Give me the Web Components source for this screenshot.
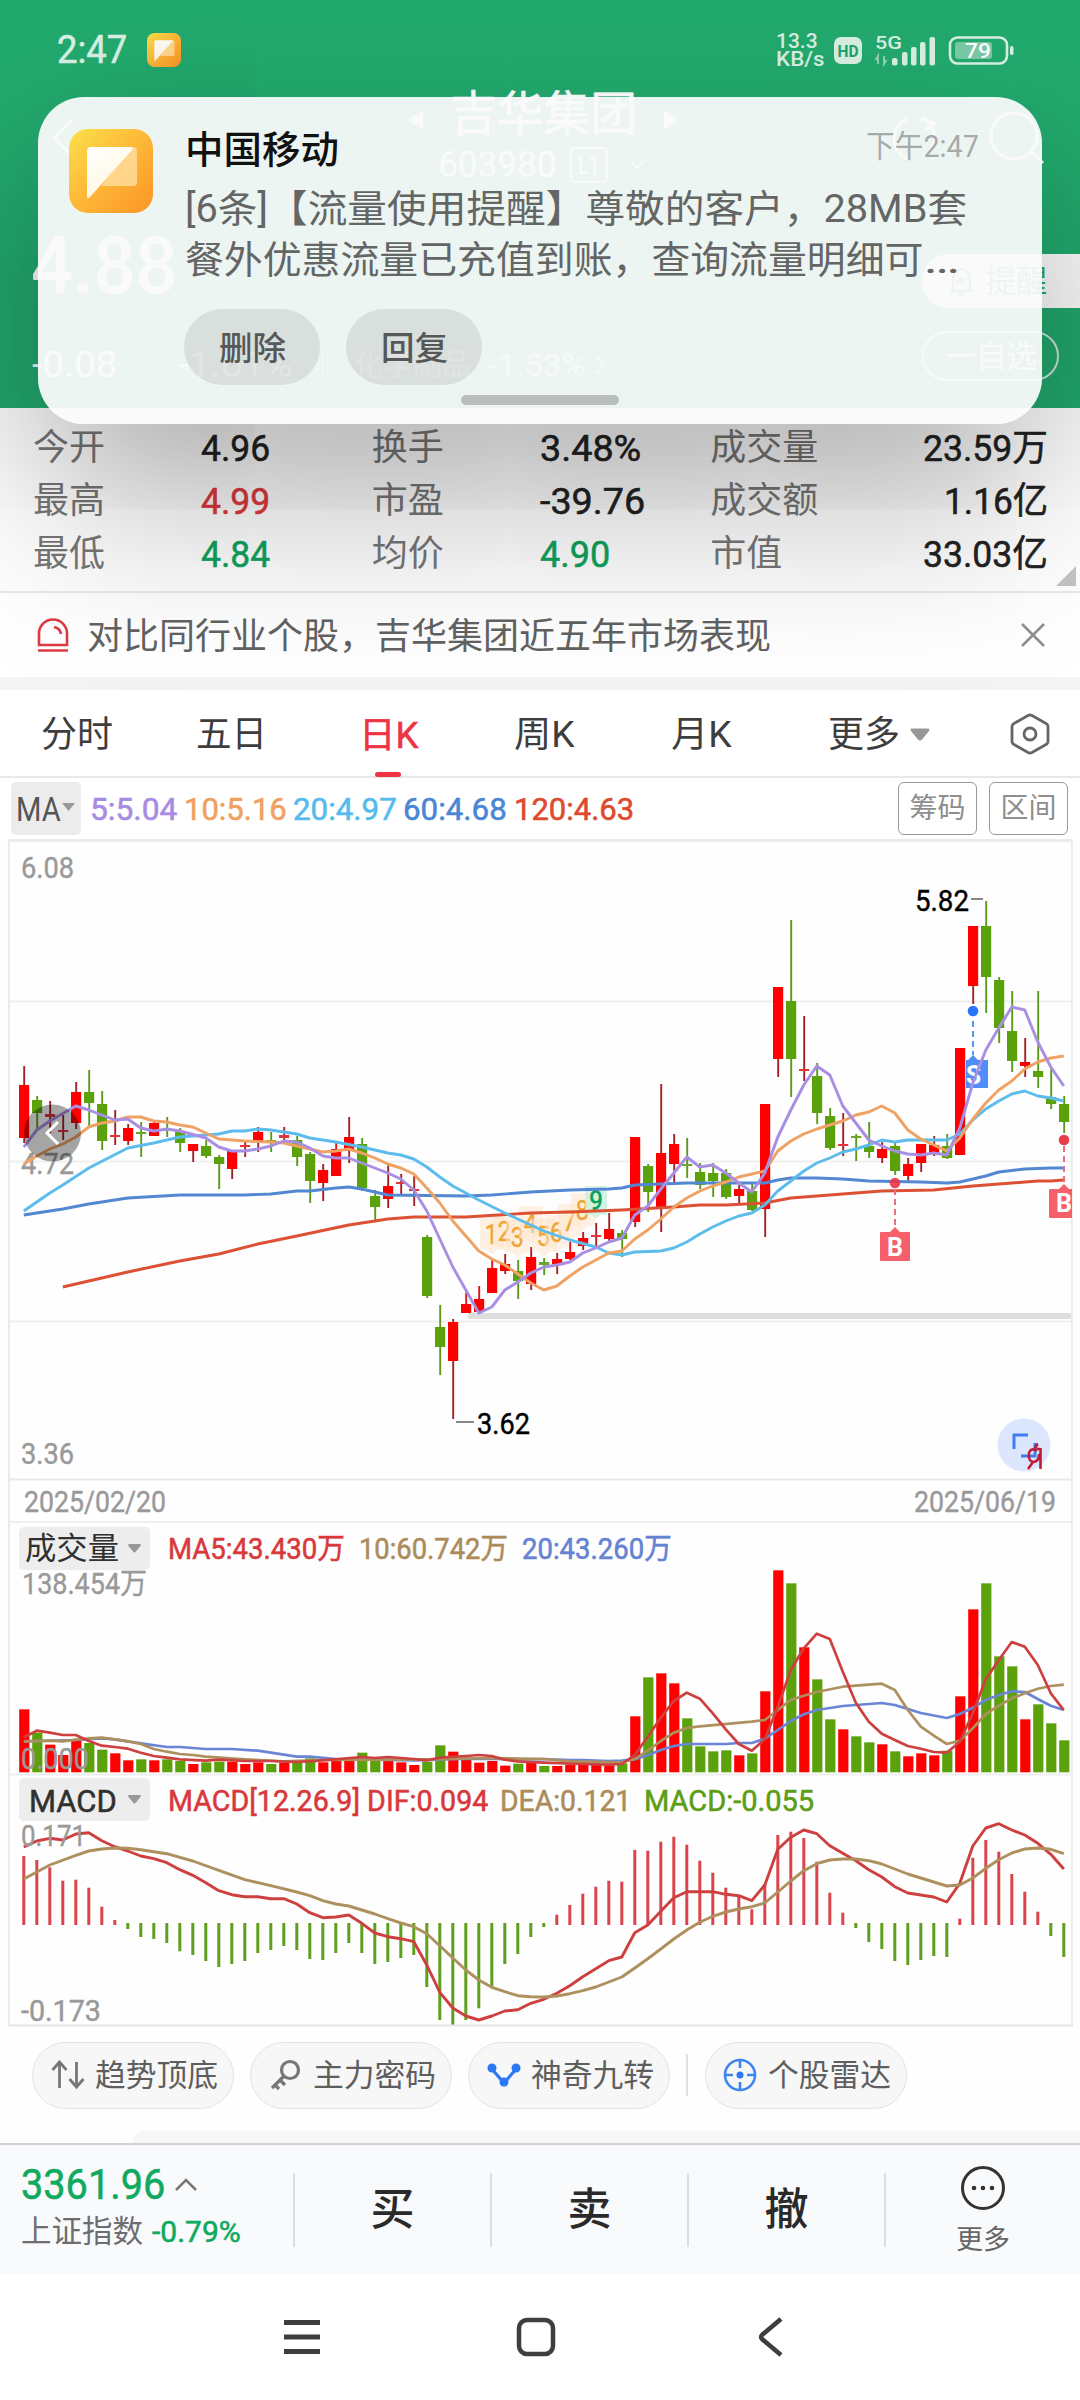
<!DOCTYPE html>
<html lang="zh-CN">
<head>
<meta charset="utf-8">
<title>吉华集团 603980</title>
<style>
html,body{margin:0;padding:0;background:#fff}
body{width:1080px;height:2400px;overflow:hidden;font-family:Roboto,"Noto Sans CJK SC",sans-serif}
</style>
</head>
<body>
<stock-app></stock-app>
<script>
const FONT = 'Roboto,"Noto Sans CJK SC",sans-serif';
const define = (name, html, setup) => customElements.define(name, class extends HTMLElement {
  connectedCallback() {
    if (this.shadowRoot) return;
    const root = this.attachShadow({ mode: 'open' });
    root.innerHTML = typeof html === 'function' ? html(this) : html;
    if (setup) setup(this, root);
  }
});

/* One line of text, set to a given width. w = width, s = font size, c = colour, b = weight, m = slightly emboldened */
define('fit-text', el => `<style>
  :host{display:block;flex:none;width:${el.getAttribute('w')}px;height:${el.getAttribute('s')}px;line-height:${el.getAttribute('s')}px;
    font-size:${el.getAttribute('s')}px;font-family:${FONT};${el.hasAttribute('c') ? 'color:' + el.getAttribute('c') + ';' : ''}font-weight:${el.getAttribute('b') || 400};
    ${el.hasAttribute('m') ? '-webkit-text-stroke:.55px currentColor;' : ''}}
  span{display:inline-block;white-space:nowrap;transform-origin:0 50%}
  </style><span><slot></slot></span>`, (el, root) => {
  const span = root.querySelector('span');
  const w = span.offsetWidth;
  if (w) span.style.transform = `scaleX(${el.getAttribute('w') / w})`;
});

define('app-icon', el => `<style>:host{display:block;flex:none;width:${el.getAttribute('w')}px;height:${el.getAttribute('w')}px}svg{display:block;width:100%;height:100%}</style>
<svg viewBox="0 0 84 84"><defs><linearGradient id="a" x1="0" y1="0" x2="1" y2="1"><stop offset="0" stop-color="#fbe14b"/><stop offset=".45" stop-color="#fdbb39"/><stop offset="1" stop-color="#fd9427"/></linearGradient>
<linearGradient id="b" x1="0" y1="0" x2=".6" y2="1"><stop offset="0" stop-color="#fff"/><stop offset="1" stop-color="#fff6df"/></linearGradient></defs>
<rect width="84" height="84" rx="19" fill="url(#a)"/><path d="M62 18 h2 q4 0 4 4 v31 q0 4 -4 4 H32Z" fill="#ffdc9a" opacity=".85"/>
<path d="M22 18 H62 q3 0 1 3 L21 68 q-3 3 -3 -1 V22 q0 -4 4 -4Z" fill="url(#b)"/></svg>`);

define('status-bar', `<style>
:host{display:flex;height:100px;box-sizing:border-box;align-items:center;color:#d9f1e5}
.l,.r{display:flex;align-items:center}.l{margin-left:57px;gap:20px;flex:1}
.rate{margin-right:8px;display:flex;flex-direction:column}
.rate fit-text+fit-text{margin-top:-3px}
svg{display:block;overflow:visible}
</style>
<div class="l"><fit-text w="70" s="38" m>2:47</fit-text><app-icon w="34"></app-icon></div>
<div class="r"><div class="rate"><fit-text w="42" s="21" b="500">13.3</fit-text><fit-text w="49" s="21" b="500">KB/s</fit-text></div>
<svg width="182" height="34" viewBox="833 32 182 34">
<rect x="834" y="36" width="28" height="27" rx="7" fill="#d9f1e5"/><text x="837.500" y="55.800" font-family="Roboto" font-weight="700" font-size="17" textLength="21" lengthAdjust="spacingAndGlyphs" fill="#21a36a">HD</text>
<text x="875" y="48" font-family="Roboto" font-weight="500" font-size="18.500" textLength="27" lengthAdjust="spacingAndGlyphs" fill="#d9f1e5">5G</text>
<path d="M878 63V55l-2.500 4M884 55v8l2.500-4" stroke="#8fd2b3" stroke-width="2" fill="none"/>
<g fill="#d9f1e5"><rect x="892" y="57" width="5.500" height="7.500" rx="2"/><rect x="902" y="51" width="5.500" height="13.500" rx="2"/><rect x="911" y="46" width="5.500" height="18.500" rx="2"/><rect x="920" y="41" width="5.500" height="23.500" rx="2"/><rect x="929.500" y="36" width="5.500" height="28.500" rx="2"/></g>
<rect x="950" y="36.500" width="57" height="26" rx="7.500" fill="none" stroke="#d9f1e5" stroke-width="2.600"/><rect x="955" y="41" width="37" height="17" rx="3" fill="#7ccaa6"/>
<rect x="1010" y="45" width="3.500" height="9" rx="1.700" fill="#d9f1e5"/>
<text x="965" y="57" font-family="Roboto" font-weight="500" font-size="21" textLength="26" lengthAdjust="spacingAndGlyphs" fill="#fff">79</text></svg></div>`,
el => { el.style.paddingRight = '65px'; });

define('quote-header', `<style>
:host{display:block;height:408px;background:#22aa6e;color:#fff;overflow:hidden}
div{display:flex;align-items:center}
svg{display:block;flex:none}
.nav{height:108px;margin-top:-16px}
.mid{flex-direction:column;width:300px;margin-left:319px;align-items:center}
.title{height:54px;gap:27px;padding-top:5px;box-sizing:border-box}.code{height:54px;gap:14px;margin-left:-4px}
.l1{width:34px;height:32px;border:2px solid #fff;border-radius:5px;justify-content:center}
.tri{width:0;height:0;border:10px solid transparent;margin-top:12px}
.price{height:148px;justify-content:space-between;padding-left:31px}
.remind{width:158px;height:54px;background:#fff;border-radius:27px 0 0 27px;color:#22aa6e;gap:9px;margin-top:30px;box-sizing:border-box;padding-left:25px}
.chg{height:50px;padding-left:32px}
.fav{width:137px;height:50px;box-sizing:border-box;border:2px solid rgba(255,255,255,.75);border-radius:26px;justify-content:center;margin-left:auto;margin-right:21px;margin-top:-18px}
.dim{opacity:.65}
</style>
<status-bar></status-bar>
<div class="nav"><svg width="22" height="40" viewBox="0 0 22 40" style="margin-left:52px"><path d="M20 2 2 20l18 18" fill="none" stroke="#fff" stroke-width="3"/></svg>
<div class="mid"><div class="title"><span class="tri" style="border-right:15px solid #fff;border-left:0"></span><fit-text w="187" s="47" m>吉华集团</fit-text><span class="tri" style="border-left:15px solid #fff;border-right:0"></span></div>
<div class="code"><fit-text w="118" s="36">603980</fit-text><div class="l1"><fit-text w="22" s="25">L1</fit-text></div><svg width="14" height="12" viewBox="0 0 14 12" style="margin-left:8px"><path d="M1 2l6 7 6-7" fill="none" stroke="#fff" stroke-width="2"/></svg></div></div>
<svg width="152" height="56" viewBox="893 108 152 56" style="margin-left:200px"><path d="M907 117A21 21 0 0 0 910 157M924 154A21 21 0 0 0 921 116M923 116l11 5-9 7" fill="none" stroke="#fff" stroke-width="3"/><circle cx="1014" cy="134" r="23" fill="none" stroke="#fff" stroke-width="3"/><path d="M1031 150l12 11" stroke="#fff" stroke-width="3"/></svg></div>
<div class="price"><fit-text w="147" s="80" b="500">4.88</fit-text><div class="remind"><svg width="29" height="30" viewBox="0 0 29 30"><path d="M3 25h23M6 24V12a8.500 8.500 0 0 1 17 0v12M11 28h7M10 17l4-5 1 5 4-4" fill="none" stroke="#22aa6e" stroke-width="2.500"/></svg><fit-text w="62" s="31">提醒</fit-text></div></div>
<div class="chg"><fit-text w="85" s="36">-0.08</fit-text><fit-text w="115" s="36" style="margin-left:61px">-1.61%</fit-text><span class="dim" style="width:1px;height:28px;background:#fff;margin:0 31px 0 29px"></span><fit-text class="dim" w="117" s="30">化学制品</fit-text><fit-text class="dim" w="98" s="31" style="margin-left:17px">-1.53%</fit-text><svg class="dim" width="12" height="20" viewBox="0 0 12 20" style="margin-left:9px"><path d="M1 1l8 9-8 9" fill="none" stroke="#fff" stroke-width="2"/></svg>
<div class="fav"><fit-text w="92" s="31">一自选</fit-text></div></div>`);

define('notice-card', `<style>
:host{display:flex;position:absolute;left:38px;top:97px;width:1004px;height:327px;box-sizing:border-box;border-radius:46px;background:rgba(250,250,250,.945);
box-shadow:0 72px 180px rgba(0,0,0,.34);padding:32px 74px 0 31px}
.body{margin-left:32px;flex:1;padding-top:2px}
.top{display:flex;justify-content:space-between;align-items:center;height:38px;width:794px;color:#a6aba9}
.btns{display:flex;gap:26px;margin-top:30px;margin-left:-1px}
.btn{width:136px;height:76px;border-radius:38px;background:rgba(0,0,0,.085);display:flex;align-items:center;justify-content:center;padding-top:2px;box-sizing:border-box}
.handle{width:158px;height:10px;border-radius:5px;background:#b9bdbc;margin:10px 0 0 276px}
.e{display:inline-block;transform:scaleX(1.4);transform-origin:0 50%}
</style>
<app-icon w="84"></app-icon>
<div class="body"><div class="top"><fit-text w="154" s="38" c="#111" b="500">中国移动</fit-text><fit-text w="113" s="31" style="margin-top:-7px">下午2:47</fit-text></div>
<fit-text w="782" s="38" c="#646665" style="margin-top:21px">[6条]【流量使用提醒】尊敬的客户，28MB套</fit-text>
<fit-text w="764" s="38" c="#646665" style="margin-top:13px">餐外优惠流量已充值到账，查询流量明细可<span class="e">…</span></fit-text>
<div class="btns"><div class="btn"><fit-text w="67" s="33" c="#555857" b="500">删除</fit-text></div><div class="btn"><fit-text w="67" s="33" c="#555857" b="500">回复</fit-text></div></div>
<div class="handle"></div></div>`);

const stats = [
  ['今开','4.96','#222',69,'换手','3.48%','#222',101,'成交量','23.59万','#222',125],
  ['最高','4.99','#e0393c',69,'市盈','-39.76','#222',105,'成交额','1.16亿','#222',104],
  ['最低','4.84','#0fa35e',69,'均价','4.90','#0fa35e',70,'市值','33.03亿','#222',125]];
define('quote-stats', () => `<style>
:host{display:block;height:185px;box-sizing:border-box;background:#fff;padding:14px 32px 0 33px;border-bottom:2px solid #e9e9e9;color:#777}
.row{display:flex;height:53px;align-items:center}
.c{display:flex}.a{width:339px}.a fit-text:first-child{width:72px;margin-right:96px}
.z{width:338px;justify-content:space-between}
.tri{width:0;height:0;border:10px solid #c4c4c4;border-top-color:transparent;border-left-color:transparent;margin:-15px -28px 0 auto}
</style>` + stats.map(r => `<div class="row"><div class="c a"><fit-text w="72" s="36">${r[0]}</fit-text><fit-text w="${r[3]}" s="37" c="${r[2]}" m>${r[1]}</fit-text></div>
<div class="c a"><fit-text w="72" s="36">${r[4]}</fit-text><fit-text w="${r[7]}" s="37" c="${r[6]}" m>${r[5]}</fit-text></div>
<div class="c z"><fit-text w="${r[8].length * 36}" s="36">${r[8]}</fit-text><fit-text w="${r[11]}" s="37" c="${r[10]}" m>${r[9]}</fit-text></div></div>`).join('') + '<div class="tri"></div>');

define('tip-bar', `<style>:host{display:flex;height:84px;align-items:center;background:#fff;border-bottom:13px solid #f4f4f4;padding:0 35px 0 37px}svg{display:block}</style>
<svg width="32" height="34" viewBox="0 0 32 34"><path d="M2 27V15.500a14 14 0 0 1 28 0V27ZM17 9q6 1 7 7M1 32.500h30" fill="none" stroke="#de3b45" stroke-width="2.600"/></svg>
<fit-text w="684" s="36" c="#626262" style="margin:3px 0 0 18px">对比同行业个股，吉华集团近五年市场表现</fit-text>
<svg width="24" height="24" viewBox="0 0 24 24" style="margin-left:auto"><path d="M1 1l22 22M23 1L1 23" stroke="#8f8f8f" stroke-width="2.500"/></svg>`);

define('period-tabs', `<style>:host{display:flex;height:88px;box-sizing:border-box;align-items:center;border-bottom:2px solid #e8e8e8;padding:2px 30px 0 41px;background:#fff;color:#3d3d3d}
svg{display:block}fit-text{margin-top:2px}.on{display:flex;flex-direction:column;align-items:center;height:86px;box-sizing:border-box;padding-top:25px}
.on i{width:26px;height:6px;border-radius:3px;background:#ee3344;margin-top:18px;margin-left:-2px}</style>
<fit-text w="72" s="36">分时</fit-text><fit-text w="71" s="36" style="margin-right:92px;margin-left:83px">五日</fit-text>
<div class="on"><fit-text w="60" s="36" c="#ee3344" m>日K</fit-text><i></i></div>
<fit-text w="61" s="36" style="margin-right:96px;margin-left:95px">周K</fit-text><fit-text w="61" s="36">月K</fit-text><fit-text w="72" s="36" style="margin-left:96px">更多</fit-text>
<svg width="20" height="13" viewBox="0 0 20 13" style="margin-left:10px"><path d="M1.500 0.500h17q1.500 1 .5 2.500l-7 8.500q-2 2-4 0l-7-8.500q-1-2 .5-2.500Z" fill="#979797"/></svg>
<svg width="40" height="42" viewBox="0 0 40 42" style="margin-left:auto"><path d="M18 2.500q2-1 4 0l14 8q2 1 2 3.500v14q0 2.500-2 3.500l-14 8q-2 1-4 0l-14-8q-2-1-2-3.500V14q0-2.500 2-3.500Z" fill="none" stroke="#666" stroke-width="2.800"/><circle cx="20" cy="21" r="6" fill="none" stroke="#666" stroke-width="2.800"/></svg>`);

define('ma-legend', `<style>:host{display:flex;height:61px;box-sizing:border-box;align-items:center;padding:0 12px 0 11px;background:#fff}
fit-text{margin-top:1px}
.b{display:flex;align-items:center;width:70px;height:53px;background:#ececec;border-radius:5px;box-sizing:border-box;padding-left:5px;gap:1px}
.k{width:79px;height:53px;box-sizing:border-box;border:1.500px solid #999;border-radius:6px;display:flex;align-items:center;justify-content:center}svg{display:block;margin-top:-2px}</style>
<div class="b"><fit-text w="45" s="33" c="#555">MA</fit-text><svg width="13" height="9"><path d="M0 0h13L6.500 8Z" fill="#999"/></svg></div>
<fit-text w="87" s="31" c="#a78be4" m style="margin-left:9px">5:5.04</fit-text>
<fit-text w="103" s="31" c="#f0a060" m style="margin-left:7px">10:5.16</fit-text>
<fit-text w="104" s="31" c="#55bbee" m style="margin-left:6px">20:4.97</fit-text>
<fit-text w="104" s="31" c="#4a86d4" m style="margin-left:6px">60:4.68</fit-text>
<fit-text w="120" s="31" c="#de4a2e" m style="margin-left:7px">120:4.63</fit-text>
<div class="k" style="margin-left:auto"><fit-text w="56" s="28" c="#8e8e8e">筹码</fit-text></div><div class="k" style="margin-left:12px"><fit-text w="56" s="28" c="#8e8e8e">区间</fit-text></div>`);

/* ---- charts: each step of the time axis is 13px ---- */
const X = i => 23.8 + 13 * i;
const line = (pts, color, w = 2.9, f = v => v) => `<polyline points="${pts.trim().split(/\s+/).map(p => { const [i, y] = p.split(':'); return X(+i).toFixed(1) + ',' + f(+y).toFixed(1); }).join(' ')}" fill="none" stroke="${color}" stroke-width="${w}" stroke-linejoin="round"/>`;
const label = (x, y, w, t, c = '#999', s = 29, b = 400) => `<text x="${x}" y="${y}" textLength="${w}" lengthAdjust="spacingAndGlyphs" font-size="${s}" font-weight="${b}" fill="${c}"${b === 400 ? ` stroke="${c}" stroke-width=".4"` : ''}>${t}</text>`;
const RED = '#fe0000', GREEN = '#5ba10c';
/* colour, high, body top, body bottom, low */
const candles = `r1066,1085,1138,1143 g1096,1100,1113,1130 r1101,1114,1117,1133 r1115,1130,1132,1140 r1082,1092,1123,1129 g1070,1092,1103,1127 g1091,1104,1141,1150 r1110,1135,1137,1145 r1124,1128,1141,1145 g1122,1132,1134,1157
r1122,1123,1136,1136 g1117,1129,1131,1137 g1128,1132,1143,1152 r1144,1144,1151,1162 g1140,1146,1156,1158 g1155,1157,1164,1189 r1151,1151,1169,1179 r1140,1145,1147,1157 r1127,1132,1142,1152 g1132,1140,1142,1152
r1127,1135,1138,1142 g1136,1140,1157,1166 g1152,1154,1181,1203 r1164,1170,1183,1201 r1143,1149,1176,1176 r1117,1137,1151,1163 g1138,1144,1188,1191 g1190,1196,1207,1222 r1165,1186,1199,1208 r1174,1182,1184,1194
r1176,1189,1191,1206 g1235,1237,1296,1298 g1305,1327,1347,1375 r1319,1322,1361,1419 r1289,1304,1313,1313 r1286,1299,1312,1312 r1259,1268,1293,1293 r1254,1264,1271,1274 g1260,1271,1281,1299 r1247,1257,1284,1290
g1258,1262,1265,1275 r1253,1259,1264,1274 r1242,1252,1259,1260 r1232,1238,1246,1250 r1223,1235,1237,1247 r1213,1229,1239,1243 g1230,1233,1239,1257 r1137,1137,1222,1227 g1164,1166,1192,1212 r1084,1153,1209,1232
r1134,1144,1164,1182 g1138,1164,1166,1178 g1163,1172,1185,1189 g1163,1173,1181,1197 g1169,1173,1197,1199 r1185,1189,1196,1203 g1183,1191,1210,1211 r1104,1104,1209,1237 r987,987,1059,1077 g920,1001,1059,1097
r1016,1069,1071,1081 g1063,1076,1113,1124 g1108,1116,1148,1150 r1113,1144,1146,1156 g1134,1136,1138,1161 g1122,1146,1152,1158 r1142,1149,1158,1163 g1143,1146,1171,1175 r1158,1164,1176,1181 r1144,1144,1163,1172
r1136,1145,1153,1156 g1134,1146,1158,1159 r1048,1048,1155,1155 r926,926,986,1004 g901,926,977,1013 g977,980,1028,1043 g991,1031,1061,1072 r1038,1062,1066,1077 g991,1071,1077,1088 g1067,1097,1104,1109 g1096,1104,1122,1133`
  .trim().split(/\s+/).map(s => [s[0] === 'r', ...s.slice(1).split(',').map(Number)]);

const ma5 = '0:1147 1:1130 2:1121 4:1106 5:1110 7:1120 8:1119 9:1128 10:1131 11:1129 12:1131 14:1138 15:1147 16:1151 17:1151 18:1149 19:1146 20:1141 21:1142 22:1148 23:1156 24:1158 25:1158 26:1163 27:1168 28:1173 29:1179 30:1190 31:1211 33:1267 34:1290 35:1313 36:1307 37:1290 38:1282 39:1273 40:1267 41:1265 42:1262 43:1253 44:1248 45:1242 46:1238 47:1215 48:1206 49:1189 50:1173 51:1157 52:1167 53:1165 54:1173 55:1183 56:1192 57:1173 58:1137 59:1110 60:1085 61:1066 62:1075 63:1106 64:1123 65:1140 66:1146 67:1151 68:1154 69:1155 70:1153 71:1155 72:1128 73:1083 74:1050 75:1028 76:1007 77:1010 78:1042 79:1067 80:1086';
const ma10 = '0:1164 1:1156 2:1149 3:1144 4:1137 5:1127 6:1123 7:1121 8:1117 9:1117 10:1121 11:1122 12:1125 13:1127 14:1133 15:1139 17:1141 19:1142 20:1143 21:1146 22:1149 23:1152 24:1151 25:1149 26:1153 27:1158 28:1164 29:1168 30:1174 31:1188 32:1203 33:1221 35:1251 36:1259 37:1265 38:1274 39:1283 40:1290 41:1286 42:1276 43:1267 44:1260 45:1253 46:1251 47:1239 48:1230 49:1219 50:1207 51:1198 52:1191 53:1186 54:1182 55:1177 57:1171 58:1151 59:1141 60:1134 61:1129 63:1121 64:1115 65:1112 66:1106 67:1113 68:1130 69:1139 70:1145 71:1151 72:1138 73:1119 74:1103 75:1090 76:1081 77:1069 78:1062 79:1058 80:1056';
const ma20 = '0:1211 2:1193 3:1185 5:1168 8:1148 10:1143 12:1137 15:1134 16:1131 17:1131 18:1129 19:1130 21:1134 22:1138 24:1142 26:1147 28:1153 29:1155 30:1159 31:1167 32:1177 33:1186 35:1200 37:1213 38:1219 39:1225 40:1231 42:1240 44:1247 45:1253 46:1255 47:1252 49:1251 50:1248 51:1242 52:1234 53:1227 54:1221 55:1216 56:1213 57:1205 58:1191 59:1181 60:1171 61:1163 62:1158 63:1152 64:1149 65:1145 66:1140 67:1142 68:1140 71:1140 72:1134 73:1120 74:1109 75:1101 76:1094 77:1091 78:1096 79:1098 80:1101';
const ma60 = '0:1215 3:1209 5:1204 8:1198 12:1195 17:1195 19:1194 21:1191 22:1191 24:1188 25:1187 26:1189 27:1192 28:1195 34:1196 36:1195 39:1192 42:1190 45:1189 46:1188 47:1185 49:1184 51:1183 57:1183 58:1180 59:1178 61:1178 63:1179 65:1181 69:1182 71:1183 72:1182 74:1176 75:1172 77:1169 79:1168 80:1168';
const ma120 = '3:1287 8:1272 12:1261 15:1254 18:1244 21:1236 25:1225 28:1219 30:1217 34:1217 39:1213 42:1212 46:1210 50:1207 52:1205 54:1205 57:1203 59:1198 63:1194 66:1191 70:1190 73:1186 76:1183 78:1181 79:1181 80:1180';
const turn = [[36,1234],[37,1231],[38,1237],[39,1223],[40,1236],[41,1232],[42,1221],[43,1210]];

define('k-chart', () => `<style>:host{display:block;height:684px}svg{display:block;overflow:visible;margin-left:-10px;font-family:${FONT}}</style>
<svg width="1080" height="684" viewBox="0 839 1080 684">
<g stroke="#efefef" stroke-width="2"><path d="M10 1001.500H1071M10 1161.500H1071M10 1321.500H1071"/><path stroke="#e9e9e9" d="M10 1479.500H1071"/><path d="M10 1522H1071"/><path stroke="#ebebeb" stroke-width="3" d="M8 840.500H1073"/></g>
${label(21, 878, 53, '6.08')}${label(21, 1174, 53, '4.72')}${label(21, 1464, 53, '3.36')}${label(24, 1512, 142, '2025/02/20')}${label(914, 1512, 142, '2025/06/19')}
<rect x="468" y="1313" width="603" height="6" fill="#dedede"/>
${candles.map(([up, h, t, b, l], i) => { const c = up ? RED : GREEN, x = X(i) + .4, thin = b - t < 4; return `<path d="M${x} ${h}V${l}" stroke="${up ? (l > b + 2 ? '#a32225' : '#e01418') : '#5a9a18'}" stroke-width="1.900"/><rect x="${x - 5.2}" y="${t}" width="10.200" height="${Math.max(b - t, 1.8)}" fill="${thin ? (up ? '#e0363a' : '#6ba528') : c}"/>`; }).join('')}
${turn.map(([i, y], k) => `<path d="M${X(i) - 12} ${y - 17}h24v32l-7 1-5 5-5-5-7-1Z" fill="#fde6cc" opacity=".55"/>${label(X(i) - 7, y + 10, 13, k + 1, '#f0a433', 28)}`).join('')}
<path d="M585 1186h22v29h-7l-4 4-4-4h-7Z" fill="#c9f0dd" opacity=".8"/>${label(589, 1210, 14, '9', '#0aa35c', 28, 500)}
${line(ma120, '#dc5034')}${line(ma60, '#5287d2')}${line(ma20, '#5cbcec')}${line(ma10, '#efa263')}
<g><path d="M973 1021V1055" stroke="#5596ee" stroke-width="2" stroke-dasharray="6 4"/><circle cx="973" cy="1011" r="5.300" fill="#2575f6"/><path d="M966 1060h2l5-5 5 5h10v28h-22Z" fill="#4f8ef9"/>${label(966, 1084, 15, 'S', '#fff', 25, 700)}</g>
<g><path d="M895 1189v36" stroke="#e8707c" stroke-width="2" stroke-dasharray="6 4"/><circle cx="895" cy="1183" r="5.300" fill="#ea3548" opacity=".9"/><path d="M881 1232h9l5-5 5 5h9q1 0 1 1v27q0 1-1 1h-28q-1 0-1-1v-27q0-1 1-1Z" fill="#f5606b"/>${label(887, 1256, 16, 'B', '#fff', 25, 700)}</g>
<g><path d="M1064 1146v38" stroke="#e8707c" stroke-width="2" stroke-dasharray="6 4"/><circle cx="1064" cy="1140" r="5.300" fill="#ea3d48"/><path d="M1051 1189h8l5-5 5 5h3v29h-22q-1 0-1-1v-27q0-1 2-1Z" fill="#f5606b"/>${label(1056, 1212, 16, 'B', '#fff', 25, 700)}</g>
${line(ma5, '#a88fe3')}
<circle cx="52.500" cy="1133" r="28.500" fill="#000" opacity=".35"/><path d="M58 1122L47 1133l11 11" fill="none" stroke="#fff" stroke-width="3"/>
<path d="M971 899h12M456 1422h18" stroke="#888" stroke-width="2"/>${label(915, 911, 54, '5.82', '#000')}${label(477, 1434, 53, '3.62', '#000')}
<circle cx="1024" cy="1445" r="26.500" fill="#dce7fe"/><path d="M1014 1449V1435h14M1035 1443v13h-14" fill="none" stroke="#3f7df0" stroke-width="3"/>
<path d="M1040.500 1448v21M1040 1449h-3M1038 1444q-2 1-3 5M1037 1451q-6-4-8 2-1 8 4 9 6 0 6-8M1033 1462l-5 7" fill="none" stroke="#c01c38" stroke-width="2.600"/>
</svg>`);

define('panel-head', `<style>:host{display:flex;align-items:center;flex:none;padding-left:9px}
.b{display:flex;align-items:center;justify-content:space-between;width:131px;height:43px;box-sizing:border-box;background:#ededed;border-radius:5px;padding:0 9px 0 6px;margin-right:18px}</style>
<div class="b"><slot name="name"></slot><svg width="13" height="9"><path d="M1 0h11q1.500.5.500 2l-5 6q-1 1-2 0l-5-6q-1-1.500.500-2Z" fill="#999"/></svg></div><slot></slot>`);

const vols = `r598 g668 r704 r735 r693 g699 g719 r730 r751 g748 r751 g748 g753 r762 g757 g755 r755 r762 r757 g762 r757 g757 g745 r757 r753 r753 g728 g753 r753 r757 r765 g755 g706 r725 r750 r758 r753 r767 g761 r758 g768 r768 r764 r764 r764 r766 g760 r619 g502 r490 r520 g625 g709 g724 g721 r736 g730 r544 r181 g220 r412 g508 g628 r658 g679 g697 r703 g724 r739 r730 r736 g722 r559 r298 g220 g439 g469 r628 g583 g640 g691`.split(' ');
const vy = v => 1510 + v / 3;
define('volume-chart', () => `<style>:host{display:block}panel-head{height:43px;padding-top:4px}svg{display:block;overflow:visible;margin-left:-10px;font-family:${FONT}}</style>
<panel-head><fit-text slot="name" w="94" s="31" c="#303030">成交量</fit-text><fit-text w="177" s="29" c="#d8383c" m style="margin-top:2px">MA5:43.430万</fit-text><fit-text w="149" s="29" c="#ac8c5a" m style="margin:2px 0 0 14px">10:60.742万</fit-text><fit-text w="150" s="29" c="#6582d4" m style="margin:2px 0 0 14px">20:43.260万</fit-text></panel-head>
<svg width="1080" height="206" viewBox="0 1570 1080 206">
${label(22, 1594, 125, '138.454万', '#999', 29)}
${vols.map((s, i) => `<rect x="${X(i) - 4.6}" y="${vy(+s.slice(1))}" width="10.200" height="${1772.3 - vy(+s.slice(1))}" fill="${s[0] === 'r' ? RED : GREEN}"/>`).join('')}
<path d="M10 1774.500H1071" stroke="#eeeeee" stroke-width="2"/>
${line('0:694 4:690 6:685 7:688 9:700 11:711 12:711 14:717 16:717 18:722 21:740 22:740 24:747 30:751 34:746 38:748 40:747 42:750 43:750 45:753 46:752 47:748 48:736 49:720 50:708 51:702 54:702 55:699 56:699 57:686 58:660 59:633 60:613 61:600 63:588 66:579 67:585 69:609 71:624 72:612 73:593 74:570 75:555 76:544 77:546 78:567 79:587 80:600', '#6a85d6', 2.7, vy)}
${line('0:694 2:692 3:694 4:689 5:685 6:683 7:688 8:694 9:702 10:717 11:725 12:732 13:735 14:740 17:748 20:754 23:750 31:748 36:744 40:747 42:754 46:757 47:747 48:722 49:693 50:668 51:654 52:649 56:635 57:630 58:600 59:570 60:557 61:546 63:530 65:524 66:521 67:540 68:600 69:650 70:677 71:702 72:692 73:655 74:612 75:587 76:565 77:550 78:536 79:528 80:524', '#ad905e', 2.7, vy)}
${line('0:682 1:662 2:668 3:675 4:675 5:693 6:707 7:711 8:716 9:728 10:738 11:743 12:748 14:752 15:749 17:753 19:753 21:756 23:751 26:741 27:744 28:741 30:747 31:751 32:743 34:738 35:735 36:738 37:749 38:754 40:758 43:762 45:764 46:762 47:735 48:680 49:623 50:573 51:548 52:566 53:610 54:658 55:702 56:722 57:688 58:590 59:480 60:415 61:371 62:387 63:485 64:578 65:635 66:671 67:690 68:708 69:716 70:726 71:728 72:695 73:610 74:508 75:450 76:396 77:410 78:465 79:550 80:600', '#cd403f', 2.7, vy)}
${label(21, 1769, 68, '0.000')}
</svg>`);

const hist = '228 240 262 302 299 323 380 420 447 471 477 489 514 525 543 561 552 543 519 510 498 510 537 540 519 489 519 552 546 534 525 621 720 735 720 685 618 552 522 471 441 404 375 341 320 302 305 210 212 185 170 194 242 278 323 345 388 312 165 155 174 245 338 398 444 486 507 543 555 540 528 531 416 233 180 215 282 335 395 468 531'.split(' ').map(Number);
const my = v => 1780 + v / 3;
define('macd-chart', () => `<style>:host{display:block}panel-head{height:47px}svg{display:block;overflow:visible;margin-left:-10px;font-family:${FONT}}</style>
<panel-head><fit-text slot="name" w="88" s="32" c="#303030" m style="margin:2px 0 0 4px">MACD</fit-text><fit-text w="320" s="29" c="#d8383c" m style="margin-top:3px">MACD[12.26.9] DIF:0.094</fit-text><fit-text w="131" s="29" c="#ac8c5a" m style="margin:3px 0 0 12px">DEA:0.121</fit-text><fit-text w="170" s="29" c="#5b9d14" m style="margin:3px 0 0 13px">MACD:-0.055</fit-text></panel-head>
<svg width="1080" height="203" viewBox="0 1823 1080 203">
${hist.map((v, i) => `<path d="M${X(i)} ${v < 432 ? 1925 : 1923}V${my(v).toFixed(1)}" stroke="${v < 432 ? '#da454d' : '#5f9f1e'}" stroke-width="3"/>`).join('')}
<path d="M8 2025.500H1073" stroke="#e6e6e6" stroke-width="2"/>
${line('0:201 1:183 2:175 3:180 4:162 5:158 6:182 7:200 8:213 9:228 10:236 11:248 12:269 13:286 14:308 15:332 16:344 17:350 18:350 19:356 20:356 21:372 22:398 23:413 24:411 25:405 26:430 27:459 28:470 29:476 30:485 31:555 32:637 33:684 34:708 35:720 36:708 37:693 38:689 39:670 40:658 41:640 42:617 43:590 44:566 45:542 46:531 47:458 48:435 49:394 50:353 51:335 53:335 54:343 55:347 56:362 57:315 58:208 59:172 60:150 61:161 62:197 63:220 64:242 65:269 66:291 67:320 68:339 69:345 70:351 71:366 72:310 73:198 74:144 75:131 76:150 77:165 78:190 79:223 80:267', '#cd403f', 2.9, my)}
${line('0:297 1:276 2:255 4:226 5:213 6:207 7:204 8:205 9:209 11:221 13:243 15:271 17:299 19:317 21:336 22:347 23:362 24:372 25:378 27:402 28:416 29:429 30:440 31:461 32:497 33:534 34:570 35:600 36:622 37:635 38:647 39:650 40:651 41:648 42:641 43:632 44:621 45:606 46:591 47:564 48:536 49:507 50:477 51:450 52:427 53:409 54:396 55:387 56:380 57:369 58:336 59:303 60:272 61:251 62:240 63:237 64:237 65:242 66:252 67:267 68:282 69:294 70:306 71:318 72:315 73:294 74:265 75:239 76:219 77:207 78:204 79:208 80:221', '#ad905e', 2.9, my)}
${label(21, 1846, 65, '0.171')}${label(21, 2021, 80, '-0.173')}
</svg>`);

define('chart-stack', `<style>:host{display:block;width:1061px;margin-left:8px;border-left:2px solid #ebebeb;border-right:2px solid #ebebeb;height:1187px;background:#fefefe}</style><k-chart></k-chart><volume-chart></volume-chart><macd-chart></macd-chart>`);

define('tool-pill', `<style>:host{display:flex;align-items:center;justify-content:space-between;width:202px;height:67px;box-sizing:border-box;border:1.500px solid #e3e3e3;border-radius:34px;background:#f7f7f7;padding:0 15px 0 17px;color:#5e5e5e}</style><slot></slot>`);
define('tool-row', `<style>:host{display:flex;align-items:center;padding-left:32px;height:98px}svg{display:block}i{width:2px;height:42px;background:#e2e2e2}</style>
<tool-pill><svg width="36" height="30" viewBox="0 0 36 30"><path d="M9.500 28V3M2.500 10l7-8 7 8M26.500 2v24M19.500 19l7 8 7-8" fill="none" stroke="#777" stroke-width="2.800"/></svg><fit-text w="123" s="31">趋势顶底</fit-text></tool-pill>
<tool-pill style="margin-left:16px"><svg width="34" height="32" viewBox="0 0 34 32"><circle cx="22" cy="11" r="8.500" fill="none" stroke="#777" stroke-width="3.200"/><path d="M16 17L4 29M12 21l5 5M7 26l4 4" stroke="#777" stroke-width="3.200" fill="none"/></svg><fit-text w="123" s="31">主力密码</fit-text></tool-pill>
<tool-pill style="margin-left:16px"><svg width="36" height="26" viewBox="0 0 36 26"><path d="M5 6l13 15L31 6" fill="none" stroke="#2b78f5" stroke-width="3.200"/><circle cx="6" cy="6" r="4.500" fill="#2b78f5"/><circle cx="30" cy="6" r="4.500" fill="#2b78f5"/><circle cx="18" cy="20" r="4.500" fill="#2b78f5"/></svg><fit-text w="123" s="31">神奇九转</fit-text></tool-pill>
<i style="margin:0 17px 0 16px"></i>
<tool-pill><svg width="34" height="34" viewBox="0 0 34 34"><circle cx="17" cy="17" r="15" fill="none" stroke="#3d86f0" stroke-width="2.600"/><circle cx="17" cy="17" r="3.500" fill="#2b78f5"/><path d="M17 2v8M17 24v8M2 17h8M24 17h8" stroke="#3d86f0" stroke-width="2.600"/></svg><fit-text w="123" s="31">个股雷达</fit-text></tool-pill>`);

define('trade-bar', `<style>:host{display:flex;height:132px;box-sizing:border-box;border-top:2px solid #d2d2d5;background:#f9fafc;align-items:center}
.idx{width:272px;padding:0 0 10px 21px}.a,.b{display:flex;align-items:center}.b{margin-top:9px}
.t{height:74px;width:195px;border-left:2px solid #dcdde0;display:flex;align-items:center;justify-content:center}
.m{display:flex;flex-direction:column;align-items:center;justify-content:space-between;width:192px;height:89px;margin-top:-2px}svg{display:block}</style>
<div class="idx"><div class="a"><fit-text w="144" s="43" c="#0fa960" m>3361.96</fit-text><svg width="22" height="13" viewBox="0 0 22 13" style="margin-left:10px"><path d="M1 12L11 2l10 10" fill="none" stroke="#777" stroke-width="2.500"/></svg></div>
<div class="b"><fit-text w="122" s="31" c="#6d6d70">上证指数</fit-text><fit-text w="89" s="30" c="#0fa960" m style="margin:2px 0 0 9px">-0.79%</fit-text></div></div>
<div class="t"><fit-text w="44" s="44" c="#2a2a2a" b="500">买</fit-text></div><div class="t"><fit-text w="44" s="44" c="#2a2a2a" b="500">卖</fit-text></div><div class="t"><fit-text w="44" s="44" c="#2a2a2a" b="500">撤</fit-text></div>
<div class="t" style="width:194px"><div class="m"><svg width="46" height="46" viewBox="0 0 46 46"><circle cx="23" cy="23" r="20.500" fill="none" stroke="#333" stroke-width="3"/><g fill="#333"><circle cx="14" cy="23" r="2.300"/><circle cx="23" cy="23" r="2.300"/><circle cx="32" cy="23" r="2.300"/></g></svg><fit-text w="54" s="27" c="#666">更多</fit-text></div></div>`);

define('system-nav', `<style>:host{display:flex;height:123px;align-items:center;background:#fff;padding-left:283px}svg{display:block}</style>
<svg width="38" height="38" viewBox="0 0 38 38"><path d="M1 4.500h36M1 19h36M1 33.500h36" stroke="#3e3e3e" stroke-width="5"/></svg>
<svg width="40" height="40" viewBox="0 0 40 40" style="margin-left:195px"><rect x="3" y="3" width="34" height="34" rx="8" fill="none" stroke="#3e3e3e" stroke-width="4.500"/></svg>
<svg width="26" height="40" viewBox="0 0 26 40" style="margin-left:202px"><path d="M23 2L4 18q-2 2 0 4l19 16" fill="none" stroke="#3e3e3e" stroke-width="4.500"/></svg>`);

define('stock-app', `<style>:host{display:block;width:1080px;height:2400px;position:relative;overflow:hidden;background:#fefefe}
.next{height:12px;margin:7px 0 0 132px;background:#f6f6f6;border-radius:12px 0 0 0}</style>
<quote-header></quote-header><quote-stats></quote-stats><tip-bar></tip-bar><period-tabs></period-tabs><ma-legend></ma-legend>
<chart-stack></chart-stack><tool-row></tool-row><div class="next"></div><trade-bar></trade-bar><system-nav></system-nav><notice-card></notice-card>`);
</script>
</body>
</html>
